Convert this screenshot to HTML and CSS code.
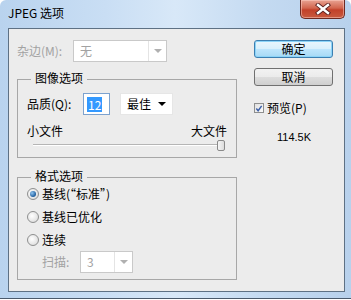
FILE: index.html
```html
<!DOCTYPE html>
<html lang="zh-CN">
<head>
  <meta charset="UTF-8" />
  <title>JPEG 选项</title>
  <link rel="stylesheet" href="styles.css">
</head>
<body>
  <div class="window">
    <!-- Title bar -->
    <div class="titlebar">
      <span class="title">JPEG 选项</span>
      <div class="close">
        <svg width="16" height="12" viewBox="0 0 16 12">
          <path d="M3 2 L13 10 M13 2 L3 10" stroke="#5a2020" stroke-width="4.2" stroke-linecap="square"/>
          <path d="M3 2 L13 10 M13 2 L3 10" stroke="#ffffff" stroke-width="2.4" stroke-linecap="square"/>
        </svg>
      </div>
    </div>

    <!-- Client area -->
    <div class="client">
      <div class="left">
        <div class="matte-row">
          <span class="label disabled">杂边(M):</span>
          <div class="combo matte disabled">
            <span class="combo-text">无</span>
            <span class="combo-btn"><span class="tri gray"></span></span>
          </div>
        </div>

        <fieldset class="group image-group">
          <legend>图像选项</legend>
          <div class="quality-row">
            <span class="label">品质(Q):</span>
            <div class="num-input"><span class="sel">12</span></div>
            <div class="combo best">
              <span class="combo-text">最佳</span>
              <span class="tri"></span>
            </div>
          </div>
          <div class="size-labels">
            <span>小文件</span>
            <span>大文件</span>
          </div>
          <div class="slider">
            <div class="thumb"></div>
          </div>
        </fieldset>

        <fieldset class="group format-group">
          <legend>格式选项</legend>
          <div class="radio-row">
            <span class="radio checked"></span>
            <span>基线(“标准”)</span>
          </div>
          <div class="radio-row">
            <span class="radio"></span>
            <span>基线已优化</span>
          </div>
          <div class="radio-row">
            <span class="radio"></span>
            <span>连续</span>
          </div>
          <div class="scan-row">
            <span class="label disabled">扫描:</span>
            <div class="combo scan disabled">
              <span class="combo-text">3</span>
              <span class="combo-btn"><span class="tri gray"></span></span>
            </div>
          </div>
        </fieldset>
      </div>

      <div class="right">
        <div class="btn default">确定</div>
        <div class="btn">取消</div>
        <div class="check-row">
          <span class="checkbox">
            <svg width="9" height="9" viewBox="0 0 9 9">
              <path d="M1.5 4.5 L3.5 7 L7.5 1.5" stroke="#3b5fa8" stroke-width="1.6" fill="none"/>
            </svg>
          </span>
          <span>预览(P)</span>
        </div>
        <div class="filesize">114.5K</div>
      </div>
    </div>
  </div>
</body>
</html>
```

FILE: styles.css
```css
body {
  margin: 0;
  width: 351px;
  height: 300px;
  background: #ffffff;
  font-family: "Noto Sans CJK SC", "Noto Sans", sans-serif;
  font-size: 12px;
  color: #000;
  overflow: hidden;
}

.window {
  width: 351px;
  height: 299px;
  box-sizing: border-box;
  border-bottom: 1px solid #4a5a6c;
  border-radius: 6px 6px 0 0;
  background: linear-gradient(90deg, #b9d3ee 0%, #c9def4 30%, #d8e8f8 50%, #c4daf1 75%, #b8d1ec 100%);
  display: flex;
  flex-direction: column;
}

.titlebar {
  height: 28px;
  display: flex;
  align-items: flex-start;
  justify-content: space-between;
  padding: 0 6px 0 8px;
}
.title {
  margin-top: 5px;
  line-height: 16px;
  font-size: 12px;
}
.close {
  width: 45px;
  height: 19px;
  box-sizing: border-box;
  border: 1px solid #6d2a22;
  border-top: none;
  border-radius: 0 0 5px 5px;
  background: linear-gradient(#e8a393 0%, #d2654e 45%, #c2412a 55%, #c85a3f 100%);
  box-shadow: inset 0 0 0 1px rgba(255, 210, 200, 0.5);
  display: flex;
  align-items: center;
  justify-content: center;
}

.client {
  margin: 0 6px 6px 8px;
  flex: 1;
  background: #ececec;
  border: 1px solid #5e7184;
  display: flex;
  padding: 11px 0 0 8px;
  gap: 17px;
}

.left {
  width: 220px;
  display: flex;
  flex-direction: column;
}

.label {
  line-height: 16px;
}
.disabled {
  color: #a2a2a2;
}

.matte-row {
  display: flex;
  align-items: center;
  height: 22px;
}
.matte-row .label {
  width: 56px;
}

.combo {
  height: 22px;
  box-sizing: border-box;
  background: #fff;
  border: 1px solid #c9c9c9;
  display: flex;
  align-items: center;
}
.combo-text {
  flex: 1;
  padding-left: 6px;
  line-height: 16px;
}
.combo-btn {
  width: 17px;
  height: 20px;
  border-left: 1px solid #e4e4e4;
  display: flex;
  align-items: center;
  justify-content: center;
}
.tri {
  width: 0;
  height: 0;
  border-left: 4px solid transparent;
  border-right: 4px solid transparent;
  border-top: 4px solid #000;
}
.tri.gray {
  border-top-color: #b0b0b0;
}
.matte {
  width: 94px;
}

.group {
  margin: 0;
  border: 1px solid #a7a7a7;
  padding: 0 9px;
}
.group legend {
  margin-left: 4px;
  padding: 0 4px 2px;
  line-height: 12px;
}

.image-group {
  margin-top: 10px;
  height: 86px;
  box-sizing: border-box;
}
.quality-row {
  display: flex;
  align-items: center;
  margin-top: 7px;
  height: 22px;
}
.quality-row .label {
  width: 56px;
}
.num-input {
  width: 27px;
  height: 22px;
  box-sizing: border-box;
  border: 1px solid #7da2ce;
  background: #fff;
  display: flex;
  align-items: center;
  padding-left: 3px;
}
.sel {
  background: #3399ff;
  color: #fff;
  line-height: 15px;
  padding: 0 1px;
}
.best {
  width: 53px;
  margin-left: 10px;
  border-color: #e6e6e6;
  padding-right: 6px;
}

.size-labels {
  display: flex;
  justify-content: space-between;
  margin-top: 9px;
  line-height: 14px;
}

.slider {
  margin: 2px 0 0 6px;
  width: 192px;
  height: 11px;
  display: flex;
  justify-content: flex-end;
  background: linear-gradient(transparent 4px, #b5b5b5 4px, #b5b5b5 5px, #ffffff 5px, #ffffff 6px, transparent 6px);
}
.thumb {
  width: 8px;
  height: 11px;
  box-sizing: border-box;
  border: 1px solid #8a8a8a;
  border-radius: 2px;
  background: linear-gradient(90deg, #f6f6f6, #dcdcdc);
}

.format-group {
  margin-top: 12px;
  height: 110px;
  box-sizing: border-box;
}
.radio-row {
  display: flex;
  align-items: center;
  gap: 3px;
  height: 18px;
  line-height: 16px;
  margin-top: 5px;
}
.radio-row:first-of-type {
  margin-top: 1px;
}
.radio {
  width: 12px;
  height: 12px;
  box-sizing: border-box;
  border-radius: 50%;
  border: 1px solid #8e8f8f;
  background: radial-gradient(circle at 40% 40%, #ffffff 0%, #e6e6e6 60%, #d0d0d0 100%);
  display: flex;
  align-items: center;
  justify-content: center;
}
.radio.checked::after {
  content: "";
  width: 6px;
  height: 6px;
  border-radius: 50%;
  background: radial-gradient(circle at 35% 35%, #8fc4f0, #1d5c9c 70%);
}

.scan-row {
  display: flex;
  align-items: center;
  height: 22px;
  margin-top: 2px;
  padding-left: 15px;
}
.scan-row .label {
  width: 38px;
}
.scan {
  width: 53px;
}

.right {
  width: 79px;
  display: flex;
  flex-direction: column;
}
.btn {
  height: 18px;
  box-sizing: border-box;
  border: 1px solid #707070;
  border-radius: 3px;
  background: linear-gradient(#f2f2f2 0%, #ebebeb 50%, #dddddd 51%, #cfcfcf 100%);
  text-align: center;
  line-height: 16px;
  margin-bottom: 10px;
}
.btn.default {
  border-color: #3c7fb1;
  background: linear-gradient(#e9f6fd 0%, #d9f0fc 50%, #bee6fd 51%, #a7d9f5 100%);
  box-shadow: inset 0 0 0 1px #8cd4f8;
}

.check-row {
  display: flex;
  align-items: center;
  gap: 3px;
  margin-top: 4px;
  line-height: 16px;
}
.checkbox {
  width: 10px;
  height: 10px;
  box-sizing: border-box;
  border: 1px solid #8e8f8f;
  background: linear-gradient(135deg, #e0e0e0, #fbfbfb);
  display: flex;
  align-items: center;
  justify-content: center;
}

.filesize {
  margin: 15px 0 0 23px;
  font-family: "Liberation Sans", Arial, sans-serif;
  font-size: 11px;
  line-height: 13px;
}
```
